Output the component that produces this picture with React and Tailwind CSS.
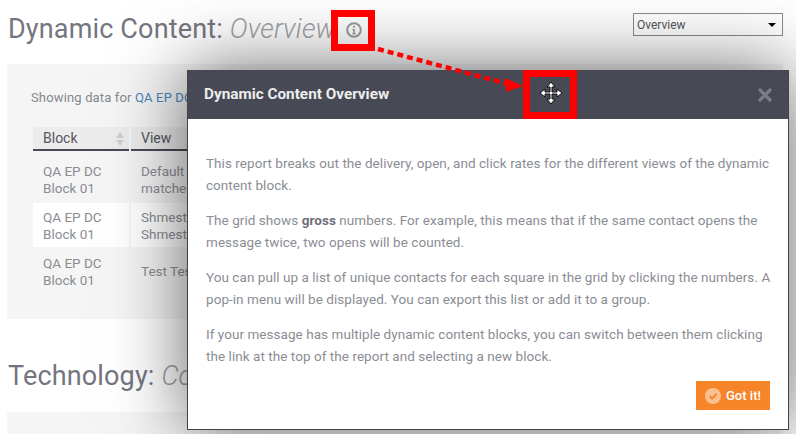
import { X } from 'lucide-react';

const font = "font-['Roboto',sans-serif]";

function Heading({ title, view }) {
  return (
    <h2 className="text-[27px] leading-[32px] tracking-[0.15px] text-[#74767f] font-normal">
      {title}: <em className="text-[#a0a1a6] font-light">{view}</em>
    </h2>
  );
}

function Row({ view, active }) {
  return (
    <div className="flex gap-[2px]">
      <div className={`w-[96px] h-[44px] pl-[10px] pt-px flex items-center text-[13.5px] leading-[17px] text-[#8b8d94] ${active ? 'bg-white' : ''}`}>
        <span>QA EP DC<br />Block 01</span>
      </div>
      <div className={`w-[200px] h-[44px] pl-[10px] pt-px flex items-center text-[13.5px] leading-[17px] text-[#8b8d94] ${active ? 'bg-white' : ''}`}>
        <span>{view}</span>
      </div>
    </div>
  );
}

function Background() {
  return (
    <div className="flex flex-col h-full">
      <div className="flex justify-between pl-[8px] pr-[13px] h-[64px]">
        <div className="flex items-start pt-[13px]">
          <Heading title="Dynamic Content" view="Overview" />
          <svg viewBox="0 0 16 16" className="w-[16px] h-[16px] ml-[10px] mt-[9px] text-[#9a9ba0]" fill="none">
            <circle cx="8" cy="8" r="6.8" stroke="currentColor" strokeWidth="2" />
            <rect x="7.1" y="3.8" width="1.9" height="1.9" fill="currentColor" />
            <path d="M6.3 7h2.6v4h1v1.2H6.3V11h1V8.2h-1z" fill="currentColor" />
          </svg>
        </div>
        <div className="mt-[13px] w-[150px] h-[23px] border border-[#8a8a8a] flex items-center justify-between pl-[3px] pr-[6px] text-[12px] text-[#55565c]">
          <span>Overview</span>
          <span className="w-0 h-0 border-x-[4px] border-x-transparent border-t-[4px] border-t-black" />
        </div>
      </div>
      <div className="mx-[7px] mr-[13px] h-[255px] bg-[#f5f5f5] pt-[25px] pl-[24px]">
        <p className="text-[13px] leading-[17px] tracking-[0.15px] text-[#85878e]">
          Showing data for <span className="text-[#4a86ba]">QA EP DC Block 01</span>
        </p>
        <div className="flex gap-[2px] ml-[2px] mt-[21px] text-[14px] text-[#55575f]">
          <div className="w-[96px] h-[24px] pl-[10px] pt-px bg-[#ececec] border-b-2 border-[#474a55] flex items-center justify-between pr-[5px]">
            <span>Block</span>
            <span className="flex flex-col gap-[2px]">
              <span className="block w-0 h-0 border-x-[4px] border-x-transparent border-b-[6px] border-b-[#cfcfcf]" />
              <span className="block w-0 h-0 border-x-[4px] border-x-transparent border-t-[6px] border-t-[#cfcfcf]" />
            </span>
          </div>
          <div className="w-[200px] h-[24px] pl-[10px] pt-px bg-[#ececec] border-b-2 border-[#474a55] flex items-center">View</div>
        </div>
        <div className="flex flex-col ml-[2px] mt-[6px] gap-[2px]">
          <Row view={<>Default Content<br />matches all</>} />
          <Row view={<>Shmestern<br />Shmestern</>} active />
          <Row view="Test Test" />
        </div>
      </div>
      <div className="pl-[8px] pt-[41px] h-[93px]">
        <Heading title="Technology" view="Content" />
      </div>
      <div className="mx-[7px] mr-[13px] flex-1 bg-[#f5f5f5]" />
    </div>
  );
}

function Modal() {
  return (
    <div className="absolute left-[187px] top-[70px] w-[602px] h-[360px] bg-white border border-[#444] border-t-0 shadow-[0_0_70px_rgba(0,0,0,0.6)] flex flex-col">
      <div className="h-[49px] shrink-0 bg-[#474a55] flex items-center justify-between pl-[16px] pr-[13px]">
        <span className="text-[15.3px] font-bold text-[#eceded]">Dynamic Content Overview</span>
        <X size={20} strokeWidth={4} className="text-[#7b7d85]" />
      </div>
      <div className="flex-1 flex flex-col pl-[18px] pt-[33px] text-[13.5px] leading-[22px] tracking-[0.05px] text-[#8b8d94]">
        <p className="mb-[13px]">This report breaks out the delivery, open, and click rates for the different views of the dynamic<br />content block.</p>
        <p className="mb-[13px]">The grid shows <b className="text-[#6d6f78]">gross</b> numbers. For example, this means that if the same contact opens the<br />message twice, two opens will be counted.</p>
        <p className="mb-[13px]">You can pull up a list of unique contacts for each square in the grid by clicking the numbers. A<br />pop-in menu will be displayed. You can export this list or add it to a group.</p>
        <p>If your message has multiple dynamic content blocks, you can switch between them clicking<br />the link at the top of the report and selecting a new block.</p>
        <div className="flex justify-end pr-[18px] mt-[14px]">
          <div className="w-[74px] h-[29px] bg-[#f68428] flex items-center justify-center gap-[5px] text-[13px] font-medium text-white">
            <svg viewBox="0 0 16 16" className="w-[16px] h-[16px]">
              <circle cx="8" cy="8" r="8" fill="#fbc08f" />
              <path d="M4.5 8l2.6 2.6 4.6-5" fill="none" stroke="#f68428" strokeWidth="2" />
            </svg>
            <span>Got it!</span>
          </div>
        </div>
      </div>
    </div>
  );
}

function Annotations() {
  return (
    <>
      <div className="absolute left-[331px] top-[10px] w-[44px] h-[41px] border-[7px] border-[#ff0000]" />
      <div className="absolute left-[523px] top-[70px] w-[54px] h-[49px] border-[7px] border-[#ff0000]" />
      <svg className="absolute left-0 top-0" width="796" height="434" fill="none">
        <path d="M378 49L508 84" stroke="#ff0000" strokeWidth="4.5" strokeDasharray="6 4" />
        <path d="M523 86L505 78L506 92z" fill="#ff0000" />
        {/* move cursor */}
        <path
          d="M551 82l4 5h-3v5h5v-3l5 4-5 4v-3h-5v5h3l-4 5-4-5h3v-5h-5v3l-5-4 5-4v3h5v-5h-3z"
          fill="#fff"
          stroke="#111"
          strokeWidth="1"
        />
      </svg>
    </>
  );
}

export default function App() {
  return (
    <div className={`relative w-[796px] h-[434px] overflow-hidden bg-white ${font}`}>
      <Background />
      <Modal />
      <Annotations />
    </div>
  );
}
